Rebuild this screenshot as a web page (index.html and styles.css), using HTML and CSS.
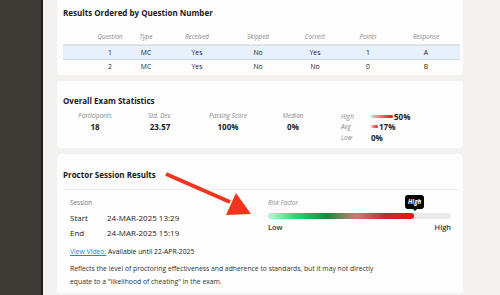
FILE: index.html
```html
<!DOCTYPE html>
<html lang="en">
  <head>
    <meta charset="UTF-8" />
    <title>Exam Results</title>
    <link rel="stylesheet" href="styles.css">
  </head>
  <body>
    <aside class="sidebar"></aside>

    <main class="content">
      <section class="card results-card">
        <h2>Results Ordered by Question Number</h2>
        <div class="qtable">
          <div class="qrow qhead">
            <span>Question</span><span>Type</span><span>Received</span><span>Skipped</span>
            <span>Correct</span><span>Points</span><span>Response</span>
          </div>
          <div class="qrow selected">
            <span>1</span><span>MC</span><span>Yes</span><span>No</span>
            <span>Yes</span><span>1</span><span>A</span>
          </div>
          <div class="qrow">
            <span>2</span><span>MC</span><span>Yes</span><span>No</span>
            <span>No</span><span>0</span><span>B</span>
          </div>
        </div>
      </section>

      <section class="card stats-card">
        <h2>Overall Exam Statistics</h2>
        <div class="stats">
          <div class="stat w1"><span class="label">Participants</span><b>18</b></div>
          <div class="stat w2"><span class="label">Std. Dev.</span><b>23.57</b></div>
          <div class="stat w3"><span class="label">Passing Score</span><b>100%</b></div>
          <div class="stat w4"><span class="label">Median</span><b>0%</b></div>
          <div class="spread">
            <span class="label">High</span>
            <span class="val"><i class="bar" style="width: 22px"></i><b>50%</b></span>
            <span class="label">Avg</span>
            <span class="val"><i class="bar" style="width: 7px"></i><b>17%</b></span>
            <span class="label">Low</span>
            <span class="val"><b>0%</b></span>
          </div>
        </div>
      </section>

      <section class="card proctor-card">
        <h2>Proctor Session Results</h2>
        <div class="proctor-body">
          <div class="session">
            <span class="small">Session</span>
            <div class="times">
              <span>Start</span><span>24-MAR-2025 13:29</span>
              <span>End</span><span>24-MAR-2025 15:19</span>
            </div>
            <p class="video"><a href="#">View Video:</a> Available until 22-APR-2025</p>
          </div>
          <div class="risk">
            <span class="label">Risk Factor</span>
            <div class="track">
              <div class="fill" style="width: 80%"></div>
              <span class="tip">High</span>
            </div>
            <div class="ends"><span>Low</span><span>High</span></div>
          </div>
        </div>
        <p class="note">
          Reflects the level of proctoring effectiveness and adherence to standards, but it may not directly
          equate to a "likelihood of cheating" in the exam.
        </p>

        <!-- annotation arrow -->
        <svg class="arrow" width="100" height="50" viewBox="0 0 100 50">
          <line x1="2" y1="2" x2="66" y2="30" stroke="#f2341c" stroke-width="4" />
          <polygon points="72,21 62,43 87,42" fill="#f2341c" />
        </svg>
      </section>
    </main>
  </body>
</html>
```

FILE: styles.css
```css
body {
  margin: 0;
  height: 295px;
  overflow: hidden;
  display: flex;
  background: #f3f2f0;
  font-family: "Open Sans", Arial, sans-serif;
  color: #222;
}

.sidebar {
  width: 41px;
  flex: none;
  background: #3b3a35;
  border-right: 2px solid #1f1e1b;
}

.content {
  width: 406px;
  margin-left: 14px;
  display: flex;
  flex-direction: column;
  gap: 6px;
}

.card {
  background: #fdfdfd;
  border-radius: 4px;
  padding: 0 4px 0 6px;
  box-sizing: border-box;
}

.card h2 {
  margin: 0;
  font-size: 8px;
  line-height: 11px;
  font-weight: 700;
  color: #1a1a1a;
}

.label {
  font-style: italic;
  color: #8a8a8a;
  font-size: 6.3px;
}

/* question table */

.results-card {
  height: 75px;
  padding-top: 7px;
  border-radius: 0 0 4px 4px;
}

.qtable {
  margin-top: 11px;
  width: 397px;
}

.qrow {
  display: grid;
  grid-template-columns: 36px 36px 66px 56px 58px 48px 68px;
  padding-left: 29px;
  height: 13px;
  align-items: center;
  text-align: center;
  font-size: 6.8px;
  color: #222;
}

.qhead {
  height: 15px;
  font-style: italic;
  color: #8a8a8a;
  font-size: 6.3px;
  border-bottom: 2px solid #dfe3e8;
}

.selected {
  background: #e7f1fc;
  border-bottom: 1px solid #cfdcea;
}

/* stats */

.stats-card {
  height: 67px;
  padding-top: 14px;
}

.stats {
  display: flex;
  margin-top: 5px;
}

.stat {
  display: flex;
  flex-direction: column;
  align-items: center;
  line-height: 10.5px;
}

.stat b {
  font-size: 8px;
}

.w1 { width: 64px; }
.w2 { width: 66px; }
.w3 { width: 70px; }
.w4 { width: 60px; }

.spread {
  margin-left: 18px;
  display: grid;
  grid-template-columns: 30px auto;
  grid-auto-rows: 10.5px;
  align-items: center;
}

.spread .val {
  display: flex;
  align-items: center;
  gap: 1px;
}

.spread b {
  font-size: 8px;
}

.bar {
  height: 3px;
  border-radius: 2px;
  background: linear-gradient(to right, #ffc3c6, #ff0a12);
}

/* proctor */

.proctor-card {
  position: relative;
  height: 139px;
  padding-top: 15px;
}

.proctor-card h2 {
  padding-bottom: 9px;
  border-bottom: 1px solid #eeeeee;
  width: 396px;
}

.proctor-body {
  display: flex;
  padding-left: 7px;
  margin-top: 8px;
}

.session {
  width: 198px;
}

.session .small {
  display: block;
  font-size: 6.3px;
  line-height: 9px;
  color: #777;
}

.times {
  display: grid;
  grid-template-columns: 37px auto;
  grid-auto-rows: 15px;
  align-items: center;
  font-size: 8px;
  color: #222;
  margin-top: 3px;
}

.video {
  margin: 7px 0 0;
  font-size: 6.8px;
  line-height: 9px;
}

.video a {
  color: #1d8ad8;
}

.risk {
  width: 183px;
}

.risk .label {
  display: block;
  line-height: 9px;
}

.track {
  position: relative;
  height: 6px;
  margin-top: 6px;
  border-radius: 3px;
  background: #e8e9eb;
}

.fill {
  height: 100%;
  border-radius: 3px;
  background: linear-gradient(to right, #bff5d3, #2ad468 20%, #138a3b 40%, #cd7d76 60%, #b6302f 80%, #f20f0f);
}

.tip {
  position: absolute;
  left: 137px;
  bottom: 10px;
  background: #000;
  color: #fff;
  font-size: 6.2px;
  line-height: 8px;
  font-weight: 700;
  font-style: italic;
  padding: 3px 3px;
  border-radius: 3px;
}

.tip::after {
  content: "";
  position: absolute;
  left: 8px;
  bottom: -2px;
  border: 2px solid transparent;
  border-bottom: 0;
  border-top-color: #000;
}

.ends {
  display: flex;
  justify-content: space-between;
  font-size: 7.4px;
  line-height: 10px;
  font-weight: 600;
  color: #333;
  margin-top: 3px;
}

.note {
  margin: 6px 0 0 7px;
  width: 318px;
  font-size: 6.8px;
  line-height: 13px;
  color: #333;
}

.arrow {
  position: absolute;
  left: 107px;
  top: 18px;
}
```
